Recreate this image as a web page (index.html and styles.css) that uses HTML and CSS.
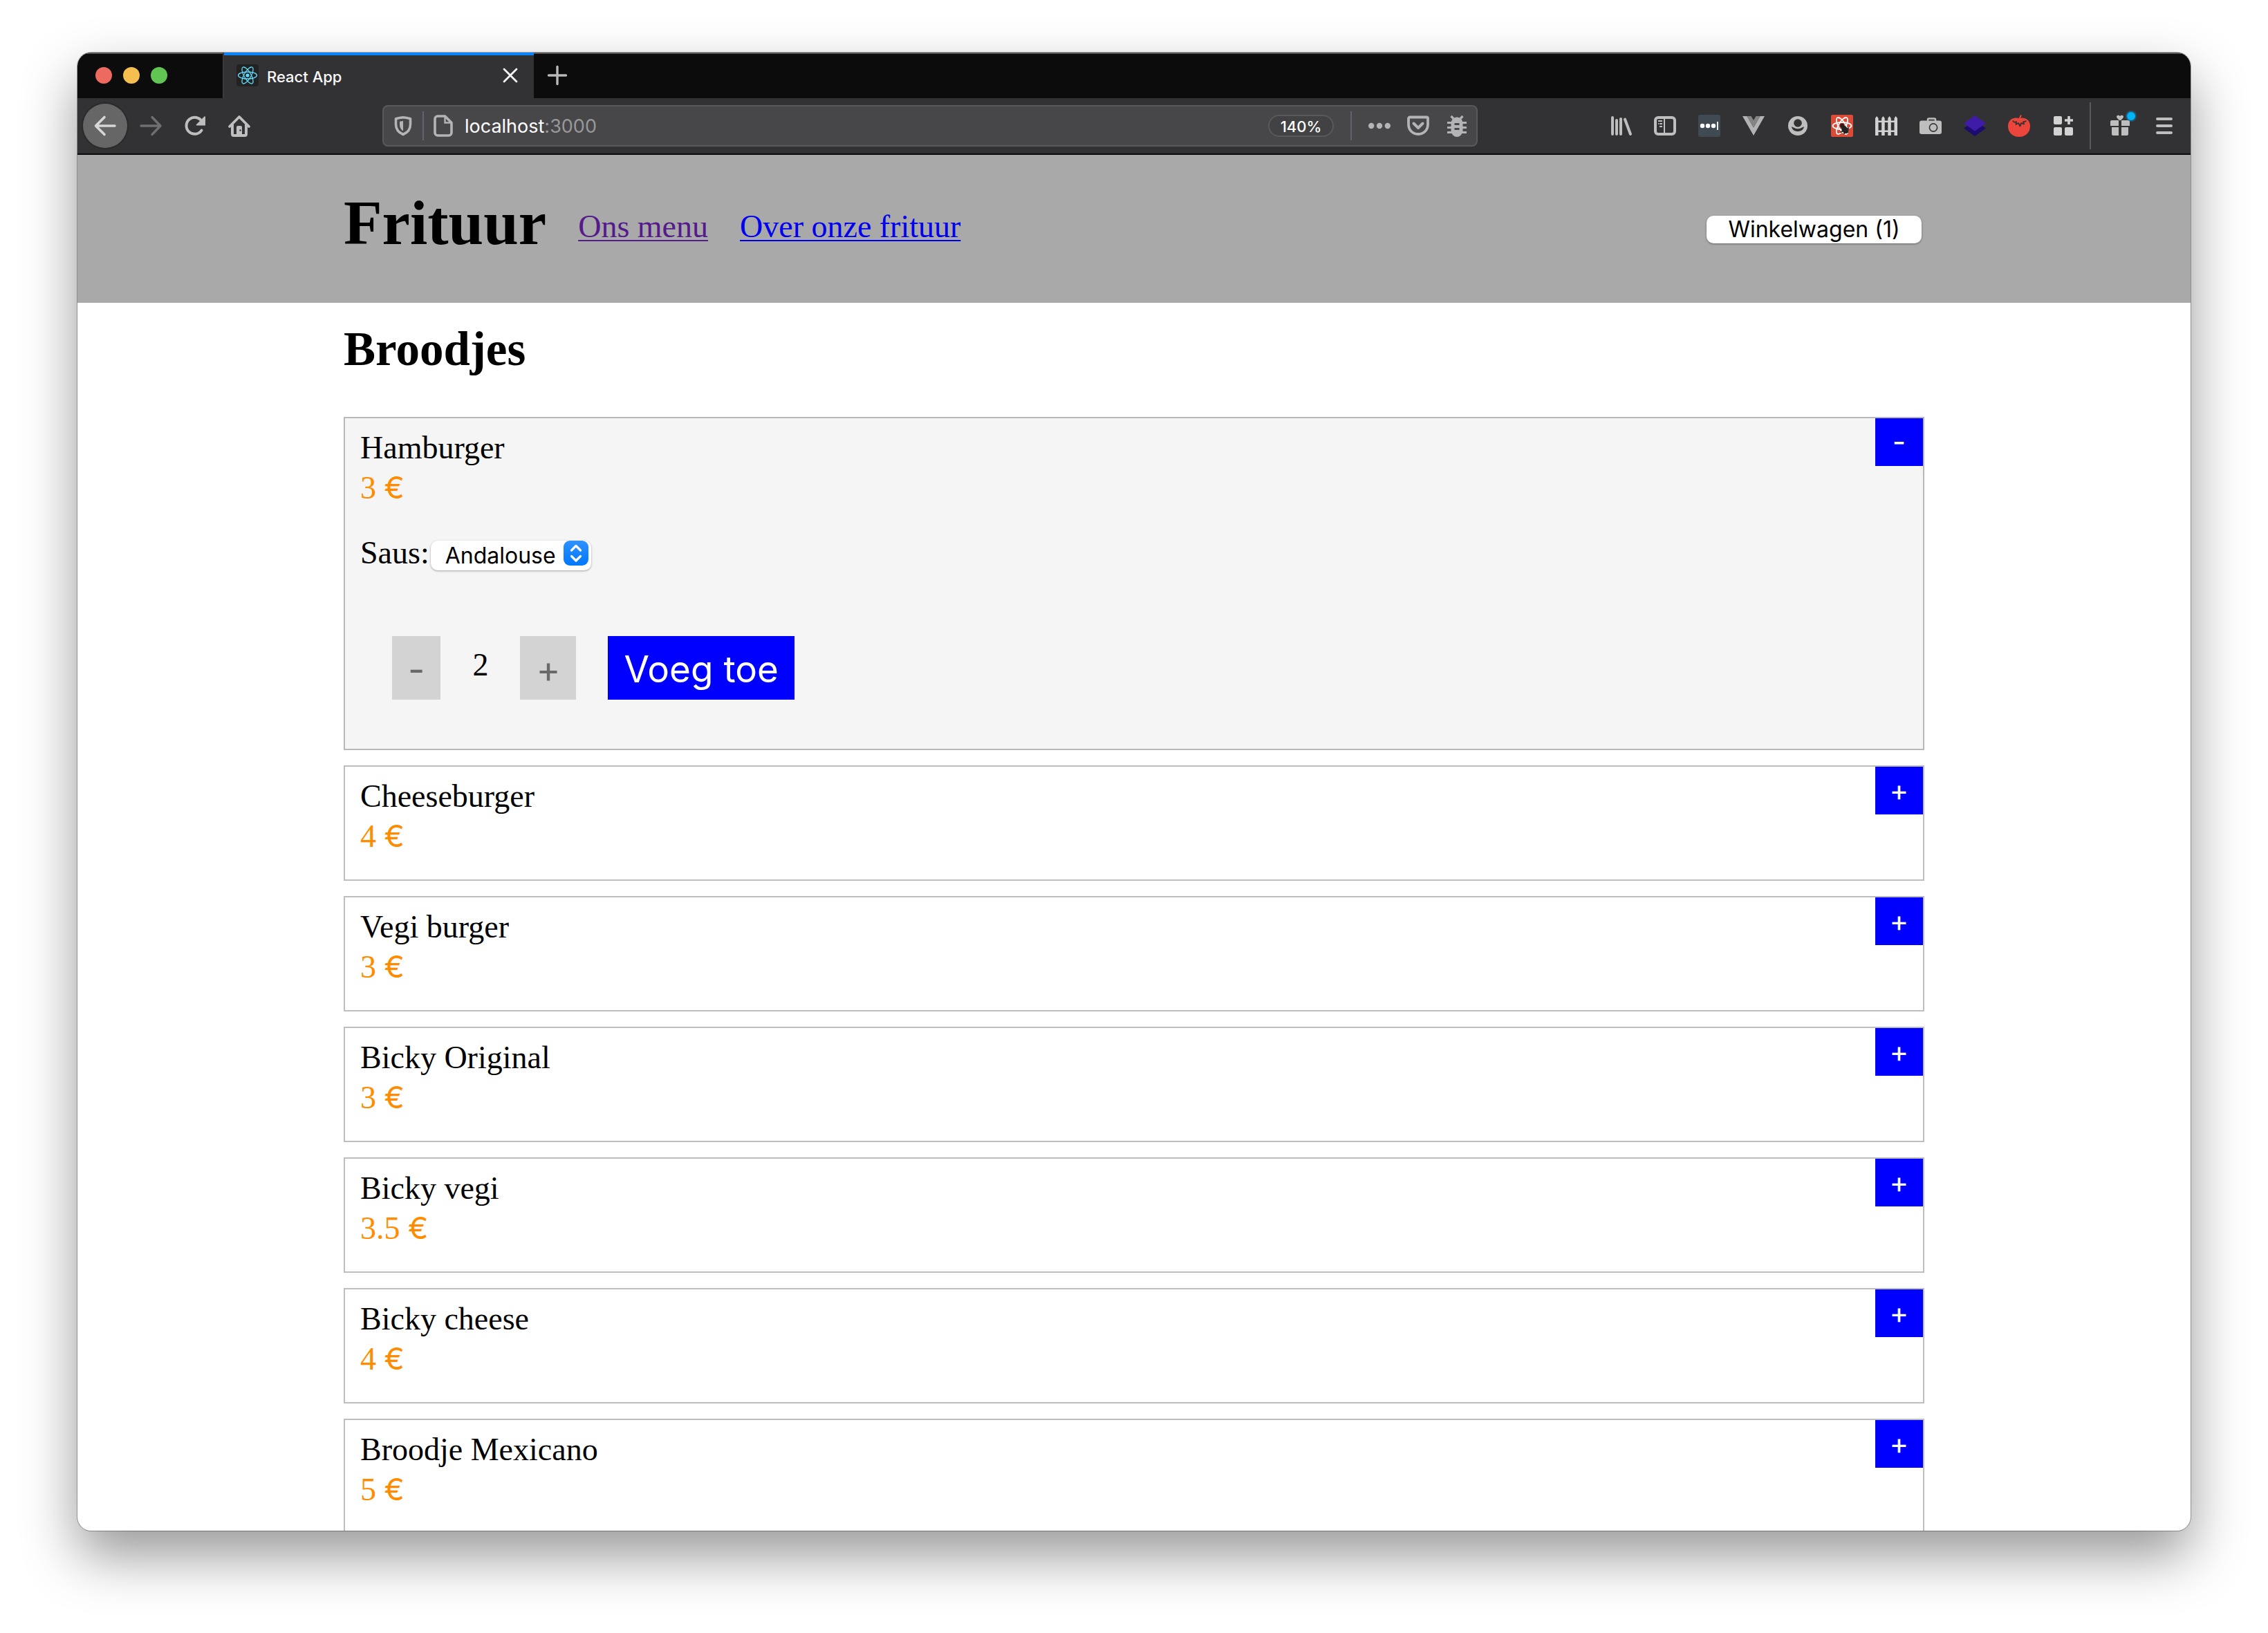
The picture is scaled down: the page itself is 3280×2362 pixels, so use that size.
FILE: index.html
```html
<!DOCTYPE html>
<html lang="nl">
<head>
<meta charset="utf-8">
<meta name="viewport" content="width=device-width, initial-scale=1">
<title>React App</title>
<link rel="stylesheet" href="styles.css">
</head>
<body>
<div class="window">
  <div class="tabbar">
    <div class="lights">
      <button class="light light-close" aria-label="Close window"></button>
      <button class="light light-min" aria-label="Minimise window"></button>
      <button class="light light-max" aria-label="Maximise window"></button>
    </div>
    <div class="tab">
      <svg class="icon" viewBox="0 0 32 32"><rect width="32" height="32" rx="4" fill="#222"/><g fill="none" stroke="#61dafb" stroke-width="1.3"><ellipse cx="16" cy="16" rx="13.5" ry="5"/><ellipse cx="16" cy="16" rx="13.5" ry="5" transform="rotate(60 16 16)"/><ellipse cx="16" cy="16" rx="13.5" ry="5" transform="rotate(120 16 16)"/></g><circle cx="16" cy="16" r="2.6" fill="#61dafb"/></svg>
      <span class="tab-title">React App</span>
      <button class="icon-button" aria-label="Close tab"><svg class="icon" viewBox="0 0 32 32"><path d="M7 7l18 18M25 7L7 25" stroke="#f5f5f5" stroke-width="2.8" stroke-linecap="round"/></svg></button>
    </div>
    <button class="icon-button new-tab" aria-label="New tab"><svg class="icon" viewBox="0 0 32 32"><path d="M16 3.500v25M3.500 16h25" stroke="#b9b9ba" stroke-width="3.400" stroke-linecap="round"/></svg></button>
  </div>

  <div class="toolbar">
    <button class="back" aria-label="Back"><svg class="icon" viewBox="0 0 32 32"><path d="M15 3.500L2.500 16 15 28.500M3 16h27" fill="none" stroke="#d6d6d6" stroke-width="3.600" stroke-linecap="round" stroke-linejoin="round"/></svg></button>
    <div class="nav-tools">
      <button class="icon-button" aria-label="Forward"><svg class="icon" viewBox="0 0 32 32"><path d="M18 3.500L30 16 18 28.500M2 16h27" fill="none" stroke="#6f6f71" stroke-width="3.400" stroke-linecap="round" stroke-linejoin="round"/></svg></button>
      <button class="icon-button" aria-label="Reload"><svg class="icon" viewBox="0 0 32 32"><path d="M25.500 22.500A12 12 0 1 1 26 10" fill="none" stroke="#bebebf" stroke-width="4" stroke-linecap="round"/><path d="M31 3v12.500H18.500c-1 0-1-1-.5-1.500L29.500 2.500c.6-.5 1.500-.5 1.500.5z" fill="#bebebf"/></svg></button>
      <button class="icon-button" aria-label="Home"><svg class="icon" viewBox="0 0 32 32"><path d="M2 17L16 3l14 14" fill="none" stroke="#bebebf" stroke-width="3.800" stroke-linecap="round" stroke-linejoin="round"/><path d="M6 14v14a2 2 0 0 0 2 2h16a2 2 0 0 0 2-2V14" fill="none" stroke="#bebebf" stroke-width="4"/><path d="M12 31V18a2 2 0 0 1 2-2h4a2 2 0 0 1 2 2v13z" fill="#bebebf"/><circle cx="17.500" cy="22.500" r="1.200" fill="#323234"/></svg></button>
    </div>

    <div class="urlbar">
      <button class="icon-button" aria-label="Protection"><svg class="icon" viewBox="0 0 32 32"><path d="M16 3.800c3.500.4 7 1 10.500 1.900v8.300c0 6.500-3.700 11.500-10.500 14.500-6.800-3-10.500-8-10.500-14.500V5.700C9 4.800 12.500 4.200 16 3.800z" fill="none" stroke="#b4b4b6" stroke-width="3.600" stroke-linejoin="round"/><path d="M16 9v14.500c-3.300-2-5-5.500-5-9.500V9.800z" fill="#b4b4b6"/></svg></button>
      <span class="url-rule"></span>
      <button class="icon-button" aria-label="Site information"><svg class="icon" viewBox="0 0 32 32"><path d="M8 2h10.500L28 11.500V26a4 4 0 0 1-4 4H8a4 4 0 0 1-4-4V6a4 4 0 0 1 4-4z" fill="none" stroke="#b4b4b6" stroke-width="3.600" stroke-linejoin="round"/><path d="M18.500 3v8.500H27" fill="none" stroke="#b4b4b6" stroke-width="2.400"/></svg></button>
      <div class="address" role="textbox" aria-label="Address" contenteditable="true" spellcheck="false">localhost<span class="port">:3000</span></div>
      <div class="url-tools">
        <button class="zoom-level">140%</button>
        <span class="url-rule"></span>
        <button class="icon-button" aria-label="Page actions"><svg class="icon" viewBox="0 0 32 32" fill="#b4b4b6"><circle cx="4.200" cy="16" r="4.200"/><circle cx="16" cy="16" r="4.200"/><circle cx="27.800" cy="16" r="4.200"/></svg></button>
        <button class="icon-button" aria-label="Save to Pocket"><svg class="icon" viewBox="0 0 32 32" fill="none" stroke="#b4b4b6" stroke-linecap="round" stroke-linejoin="round"><path d="M4 3.500h24a2 2 0 0 1 2 2V14c0 8-6 14-14 14S2 22 2 14V5.500a2 2 0 0 1 2-2z" stroke-width="3.800"/><path d="M9.500 12.500L16 19l6.500-6.500" stroke-width="4"/></svg></button>
        <button class="icon-button" aria-label="Debugger"><svg class="icon" viewBox="0 0 32 32"><path d="M11 5.500L7.500 2M21 5.500L24.500 2M2 11.500h28M2 18.500h28M2 25.500h28" stroke="#b4b4b6" stroke-width="3.200"/><path d="M16 3.500c5 0 8.500 4 8.500 9.500v9c0 5.500-3.500 10-8.500 10s-8.500-4.500-8.500-10v-9c0-5.500 3.500-9.500 8.500-9.500z" fill="#b4b4b6"/><path d="M12.500 13.500h7M12.500 20.500h7" stroke="#474749" stroke-width="3"/></svg></button>
      </div>
    </div>

    <div class="extensions">
      <button class="icon-button" aria-label="Library"><svg class="icon" viewBox="0 0 32 32" stroke="#bebebf" stroke-width="4" stroke-linecap="round"><path d="M4 4v24M10 8v20M16 6v22M22 6.500L30 28"/></svg></button>
      <button class="icon-button" aria-label="Sidebar"><svg class="icon" viewBox="0 0 32 32" fill="none" stroke="#bebebf"><rect x="2" y="4" width="28" height="24" rx="4" stroke-width="4"/><path d="M15 4v24" stroke-width="2"/><path d="M6 9h6M8 13h4M6 13h1M8 17h4" stroke-width="2"/></svg></button>
      <button class="icon-button" aria-label="Passwords"><svg class="icon" viewBox="0 0 32 32"><rect width="32" height="32" rx="3" fill="#3f4a53"/><g fill="#fff"><circle cx="6" cy="16" r="3.200"/><circle cx="14" cy="16" r="3.200"/><circle cx="22" cy="16" r="3.200"/><path d="M27 10h1.800v12H27z"/></g></svg></button>
      <button class="icon-button" aria-label="Vue devtools"><svg class="icon" viewBox="0 0 32 32"><path d="M0 2h6.500L16 18.500 25.500 2H32L16 30z" fill="#b3b3b3"/><path d="M6.500 2h6L16 8l3.500-6h6L16 18.500z" fill="#858585"/></svg></button>
      <button class="icon-button" aria-label="Account"><svg class="icon" viewBox="0 0 32 32"><circle cx="16" cy="16" r="14" fill="#bebebf"/><circle cx="16" cy="12" r="5.800" fill="#323234"/><path d="M7 17.500c1.500 0 2.500.6 4 1.500 3 1.700 7 1.700 10 0 1.500-.9 2.500-1.500 4-1.500-1 4.500-4.500 6.500-9 6.500s-8-2-9-6.500z" fill="#323234"/></svg></button>
      <button class="icon-button" aria-label="React devtools"><svg class="icon" viewBox="0 0 32 32"><rect width="32" height="32" rx="2" fill="#dc4a38"/><g fill="none" stroke="#fff" stroke-width="1.800"><ellipse cx="16" cy="16" rx="13.500" ry="5.200"/><ellipse cx="16" cy="16" rx="13.500" ry="5.200" transform="rotate(60 16 16)"/><ellipse cx="16" cy="16" rx="13.500" ry="5.200" transform="rotate(120 16 16)"/></g><path d="M13.500 25.500L26 19M14.500 19l11.500 3M19 28l1-12M24.500 26l-5-9" stroke="#222" stroke-width="1.800"/><ellipse cx="20" cy="21.500" rx="4.200" ry="6.200" transform="rotate(-35 20 21.500)" fill="#222"/><circle cx="16" cy="15.500" r="3" fill="#222"/></svg></button>
      <button class="icon-button" aria-label="Fence"><svg class="icon" viewBox="0 0 32 32" fill="#d2d2d2"><path d="M0 30V5l2.200-3L4.500 5v25zM9.200 30V5l2.200-3 2.300 3v25zM18.300 30V5l2.200-3 2.300 3v25zM27.500 30V5l2.200-3L32 5v25z"/><path d="M0 8.500h32v2.600H0zM0 22.500h32v2.600H0z"/></svg></button>
      <button class="icon-button" aria-label="Screenshot"><svg class="icon" viewBox="0 0 32 32"><path d="M12 9V7a1.500 1.500 0 0 1 1.500-1.500h8A1.500 1.500 0 0 1 23 7v2" fill="none" stroke="#bebebf" stroke-width="2.500"/><rect y="8.500" width="32" height="19.500" rx="3" fill="#bebebf"/><circle cx="20" cy="18.500" r="5.600" fill="none" stroke="#323234" stroke-width="1.600"/></svg></button>
      <button class="icon-button" aria-label="Layers"><svg class="icon" viewBox="0 0 32 32"><path d="M0 19.500L16 9l16 10.500L16 31z" fill="#1b0c6e"/><path d="M0 12.500L16 1l16 11.500L16 23.500z" fill="#3f1ca8"/></svg></button>
      <button class="icon-button" aria-label="Tomato timer"><svg class="icon" viewBox="0 0 32 32"><path d="M16 5c10-2.500 16 3.500 16 11.500C32 26 25 32 16 32S0 26 0 16.500C0 8.500 6 2.500 16 5z" fill="#ec453b"/><path d="M7 8.500c1 2.500 3 2.500 5 1.500l-.5 4 3.500-2 2.500 4.500 1.500-4.500 4 1.500-1-3.500c2 .5 3.500 0 4-1.500" fill="none" stroke="#323234" stroke-width="1.800" stroke-linejoin="round"/><path d="M16.500 6l2.500-5.500" stroke="#ec453b" stroke-width="2"/></svg></button>
      <button class="icon-button" aria-label="Extensions"><svg class="icon" viewBox="0 0 32 32" fill="#d2d2d2"><rect x="2" y="2" width="12" height="12" rx="2"/><rect x="2" y="18" width="12" height="12" rx="2"/><rect x="18" y="18" width="12" height="12" rx="2"/><path d="M22.200 2h3.600v4.200H30v3.600h-4.200V14h-3.600V9.800H18V6.200h4.200z"/></svg></button>
    </div>
    <div class="menus">
      <button class="icon-button badge-host" aria-label="What's new"><svg class="icon" viewBox="0 0 32 32" fill="#bebebf"><path d="M16 8.500c-3-2.200-5-4-5-5.800C11 .5 14.500-.2 16 2.200 17.500-.2 21 .5 21 2.700c0 1.800-2 3.600-5 5.800zM2 10a2 2 0 0 1 2-2h10v8H2zM18 8h10a2 2 0 0 1 2 2v6H18zM4 18h10v12H6a2 2 0 0 1-2-2zM18 18h10v10a2 2 0 0 1-2 2h-8z"/></svg><span class="badge"></span></button>
      <button class="icon-button" aria-label="Menu"><svg class="icon" viewBox="0 0 32 32" stroke="#bebebf" stroke-width="4" stroke-linecap="round"><path d="M6 6h20M6 16h20M6 26h20"/></svg></button>
    </div>
  </div>

  <div class="page">
    <header class="site-header">
      <div class="container header-row">
        <h1>Frituur</h1>
        <nav class="site-nav">
          <a class="visited" href="#menu">Ons menu</a>
          <a href="#over">Over onze frituur</a>
          <button class="cart">Winkelwagen (1)</button>
        </nav>
      </div>
    </header>

    <main class="container">
      <h2>Broodjes</h2>
      <ul class="products">
        <li class="product open">
          <div class="product-body">
            <div>Hamburger</div>
            <div class="price">3 <span class="euro">€</span></div>
            <div class="sauce">
              <label for="saus">Saus:</label>
              <span class="select-wrap">
                <select id="saus"><option>Andalouse</option></select>
                <svg class="select-arrows" viewBox="0 0 36 36"><defs><linearGradient id="blue" x1="0" y1="0" x2="0" y2="1"><stop offset="0" stop-color="#2f92ff"/><stop offset="1" stop-color="#0077fe"/></linearGradient></defs><rect width="36" height="36" rx="9" fill="url(#blue)"/><path d="M11.500 14L18 7.500l6.500 6.500M11.500 22.500L18 29l6.500-6.500" fill="none" stroke="#fff" stroke-width="3.200" stroke-linecap="round" stroke-linejoin="round"/></svg>
              </span>
            </div>
            <div class="order">
              <button class="step">-</button>
              <span class="quantity">2</span>
              <button class="step">+</button>
              <button class="add">Voeg toe</button>
            </div>
          </div>
          <button class="toggle">-</button>
        </li>
        <li class="product">
          <div class="product-body"><div>Cheeseburger</div><div class="price">4 <span class="euro">€</span></div></div>
          <button class="toggle">+</button>
        </li>
        <li class="product">
          <div class="product-body"><div>Vegi burger</div><div class="price">3 <span class="euro">€</span></div></div>
          <button class="toggle">+</button>
        </li>
        <li class="product">
          <div class="product-body"><div>Bicky Original</div><div class="price">3 <span class="euro">€</span></div></div>
          <button class="toggle">+</button>
        </li>
        <li class="product">
          <div class="product-body"><div>Bicky vegi</div><div class="price">3.5 <span class="euro">€</span></div></div>
          <button class="toggle">+</button>
        </li>
        <li class="product">
          <div class="product-body"><div>Bicky cheese</div><div class="price">4 <span class="euro">€</span></div></div>
          <button class="toggle">+</button>
        </li>
        <li class="product">
          <div class="product-body"><div>Broodje Mexicano</div><div class="price">5 <span class="euro">€</span></div></div>
          <button class="toggle">+</button>
        </li>
      </ul>
    </main>
  </div>
</div>
</body>
</html>
```
FILE: styles.css
```css
* {
  box-sizing: border-box;
}

body {
  margin: 0;
  height: 100vh;
  padding: 76px 112px 148px;
  background: #fff;
  overflow: hidden;
}

button,
select {
  margin: 0;
  padding: 0;
  border: 0;
  font-family: Inter, "Liberation Sans", sans-serif;
}

/* Browser window */
.window {
  display: flex;
  flex-direction: column;
  height: 100%;
  border-radius: 20px;
  overflow: hidden;
  background: #fff;
  box-shadow: 0 0 0 1px rgba(0, 0, 0, 0.3), 0 36px 80px rgba(0, 0, 0, 0.41);
  font-family: Inter, "Liberation Sans", sans-serif;
}

.icon {
  display: block;
  width: 32px;
  height: 32px;
  overflow: visible;
}

.icon-button {
  flex: none;
  background: none;
}

.tabbar {
  flex: none;
  display: flex;
  align-items: center;
  height: 66px;
  padding-left: 26px;
  background: #0c0c0d;
  box-shadow: inset 0 2px #555;
}

.lights {
  display: flex;
  gap: 16px;
  margin-right: 80px;
}

.light {
  width: 24px;
  height: 24px;
  border-radius: 50%;
}

.light-close { background: #ed6a5e; }
.light-min { background: #f5bf4f; }
.light-max { background: #61c554; }

.tab {
  display: flex;
  align-items: center;
  gap: 12px;
  width: 450px;
  height: 66px;
  padding: 0 18px;
  border-left: 2px solid #3a3a3c;
  background: #323234;
  box-shadow: inset 0 4px #0a84ff;
}

.tab-title {
  flex: 1;
  padding-top: 3px;
  font-size: 22px;
  font-weight: 500;
  color: #f9f9fa;
}

.new-tab {
  margin-left: 18px;
}

.toolbar {
  flex: none;
  display: flex;
  align-items: center;
  height: 82px;
  padding: 0 0 0 8px;
  border-bottom: 2px solid #0c0c0d;
  background: #323234;
}

.back {
  display: grid;
  place-items: center;
  width: 64px;
  height: 64px;
  border-radius: 50%;
  background: #666;
  box-shadow: 0 0 0 2px #2a2a2b;
}

.nav-tools,
.extensions,
.menus {
  flex: none;
  display: flex;
  gap: 32px;
}

.nav-tools {
  margin-left: 18px;
}

.urlbar {
  flex: 1;
  display: flex;
  align-items: center;
  gap: 12px;
  height: 60px;
  margin: 0 191px;
  padding: 0 12px;
  border: 2px solid #59595b;
  border-radius: 8px;
  background: #474749;
}

.url-rule {
  width: 2px;
  height: 42px;
  background: #5f6370;
}

.address {
  flex: 1;
  padding-left: 3px;
  font-size: 27px;
  color: #fff;
}

.port {
  color: #98989a;
}

.url-tools {
  display: flex;
  align-items: center;
  gap: 24px;
}

.zoom-level {
  width: 95px;
  height: 32px;
  border: 2px solid #59595b;
  border-radius: 16px;
  background: #424244;
  color: #fff;
  font-size: 22px;
  font-weight: 500;
  line-height: 30px;
}

.extensions {
  margin-right: 22px;
}

.menus {
  align-items: center;
  height: 68px;
  padding: 0 22px 0 26px;
  border-left: 2px solid #5a5a5c;
}

.badge-host {
  position: relative;
}

.badge {
  position: absolute;
  top: -4px;
  right: -6px;
  width: 12px;
  height: 12px;
  border-radius: 50%;
  background: #00b3f4;
  box-shadow: 0 0 0 2px rgba(0, 179, 244, 0.3);
}

/* Page */
.page {
  flex: 1;
  min-height: 0;
  overflow: hidden;
  font-family: "Liberation Serif", serif;
  font-size: 46px;
  line-height: 58px;
  color: #000;
}

.container {
  max-width: 2286px;
  margin: 0 auto;
}

.site-header {
  padding: 47px 0 53px;
  background: #a9a9a9;
}

.header-row {
  display: flex;
  align-items: center;
  gap: 46px;
}

h1 {
  margin: 0 0 10px;
  font-size: 91px;
  line-height: 104px;
}

.site-nav {
  flex: 1;
  display: flex;
  align-items: baseline;
  gap: 46px;
}

.site-nav a {
  color: #00e;
  text-decoration-thickness: 2px;
  text-underline-offset: 4px;
}

.site-nav a.visited {
  color: #551a8b;
}

.cart {
  width: 311px;
  height: 40px;
  margin: 0 4px 0 auto;
  border-radius: 10px;
  background: #fff;
  box-shadow: 0 1px 3px rgba(0, 0, 0, 0.4);
  color: #000;
  font-size: 32px;
  line-height: 38px;
}

h2 {
  margin: 28px 0 59px;
  font-size: 69px;
  line-height: 78px;
}

.products {
  display: flex;
  flex-direction: column;
  gap: 22px;
  margin: 0;
  padding: 0;
  list-style: none;
}

.product {
  display: flex;
  align-items: flex-start;
  justify-content: space-between;
  border: 2px solid #bebebe;
}

.product.open {
  border-color: #b8b8b8;
  background: #f5f5f5;
}

.product-body {
  padding: 14px 22px 33px;
}

.price {
  color: #ff8c00;
}

.euro {
  font-family: Inter, sans-serif;
  font-size: 44px;
  line-height: 44px;
}

.toggle {
  width: 69px;
  height: 69px;
  padding-bottom: 2px;
  background: #00f;
  color: #fff;
  font-size: 42px;
}

.sauce {
  display: flex;
  align-items: baseline;
  gap: 2px;
  margin-top: 36px;
}

.select-wrap {
  position: relative;
  line-height: 43px;
}

select {
  width: 232px;
  height: 43px;
  padding: 0 50px 0 21px;
  border-radius: 10px;
  appearance: none;
  background: #fff;
  box-shadow: 0 1px 3px rgba(0, 0, 0, 0.35);
  color: #000;
  font-size: 32px;
}

.select-arrows {
  position: absolute;
  top: 4px;
  right: 4px;
  width: 36px;
  height: 36px;
  pointer-events: none;
}

.order {
  display: flex;
  align-items: flex-start;
  gap: 46px;
  margin: 91px 0 38px 46px;
}

.step,
.add {
  height: 92px;
  padding: 4px 23px 0;
  font-size: 53px;
}

.step {
  background: #d3d3d3;
  color: #696969;
}

.add {
  background: #00f;
  color: #fff;
}

.quantity {
  line-height: 84px;
}
```
